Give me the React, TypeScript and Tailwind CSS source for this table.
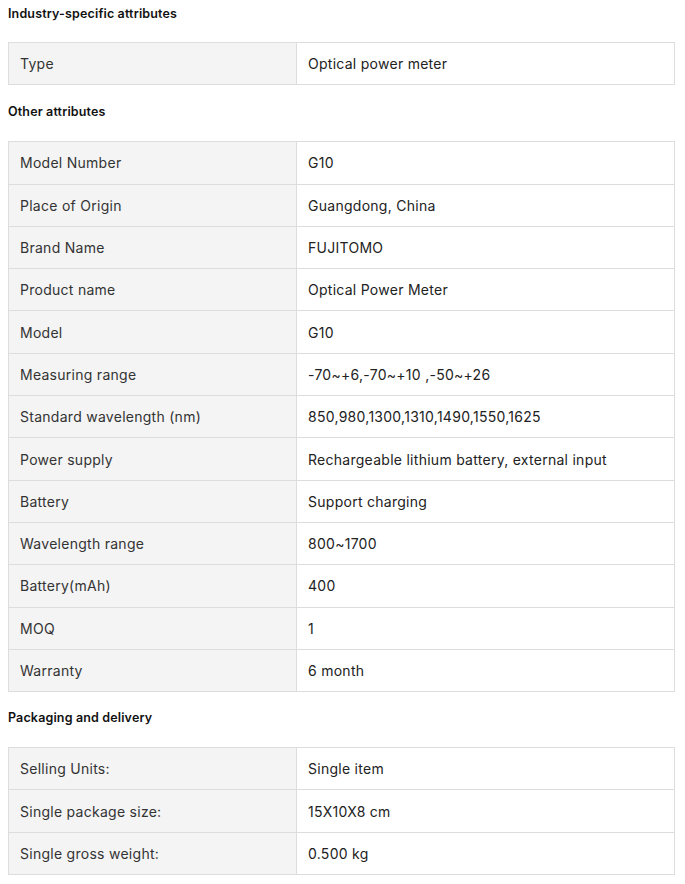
import React from "react";

type Row = [string, string];

const industry: Row[] = [["Type", "Optical power meter"]];
const other: Row[] = [
  ["Model Number", "G10"],
  ["Place of Origin", "Guangdong, China"],
  ["Brand Name", "FUJITOMO"],
  ["Product name", "Optical Power Meter"],
  ["Model", "G10"],
  ["Measuring range", "-70~+6,-70~+10 ,-50~+26"],
  ["Standard wavelength (nm)", "850,980,1300,1310,1490,1550,1625"],
  ["Power supply", "Rechargeable lithium battery, external input"],
  ["Battery", "Support charging"],
  ["Wavelength range", "800~1700"],
  ["Battery(mAh)", "400"],
  ["MOQ", "1"],
  ["Warranty", "6 month"],
];
const packaging: Row[] = [
  ["Selling Units:", "Single item"],
  ["Single package size:", "15X10X8 cm"],
  ["Single gross weight:", "0.500 kg"],
];

function Table({ rows }: { rows: Row[] }) {
  return (
    <div className="w-[667px] border-t border-l border-[#dddddd]">
      {rows.map(([k, v], i) => (
        <div key={i} className="flex h-[42.3px] border-b border-[#dddddd]">
          <div className="w-[288px] shrink-0 bg-[#f4f4f4] border-r border-[#dddddd] flex items-center pl-[11px] text-[14px] tracking-[0.27px] text-[#333333]">
            {k}
          </div>
          <div className="flex-1 border-r border-[#dddddd] flex items-center pl-[11px] text-[14px] tracking-[0.27px] text-[#222222]">
            {v}
          </div>
        </div>
      ))}
    </div>
  );
}

function Heading({ children, className }: { children: React.ReactNode; className: string }) {
  return (
    <div className={"h-[20px] leading-[20px] text-[12.5px] tracking-[0.15px] font-semibold text-[#111111] " + className}>
      {children}
    </div>
  );
}

export default function App() {
  return (
    <div className="w-[685px] min-h-[884px] bg-white px-[8px] font-['Inter','Liberation_Sans',sans-serif]">
      <Heading className="mt-[4px] mb-[18px]">Industry-specific attributes</Heading>
      <Table rows={industry} />
      <Heading className="mt-[17px] mb-[19px]">Other attributes</Heading>
      <Table rows={other} />
      <Heading className="mt-[16px] mb-[19px]">Packaging and delivery</Heading>
      <Table rows={packaging} />
    </div>
  );
}
